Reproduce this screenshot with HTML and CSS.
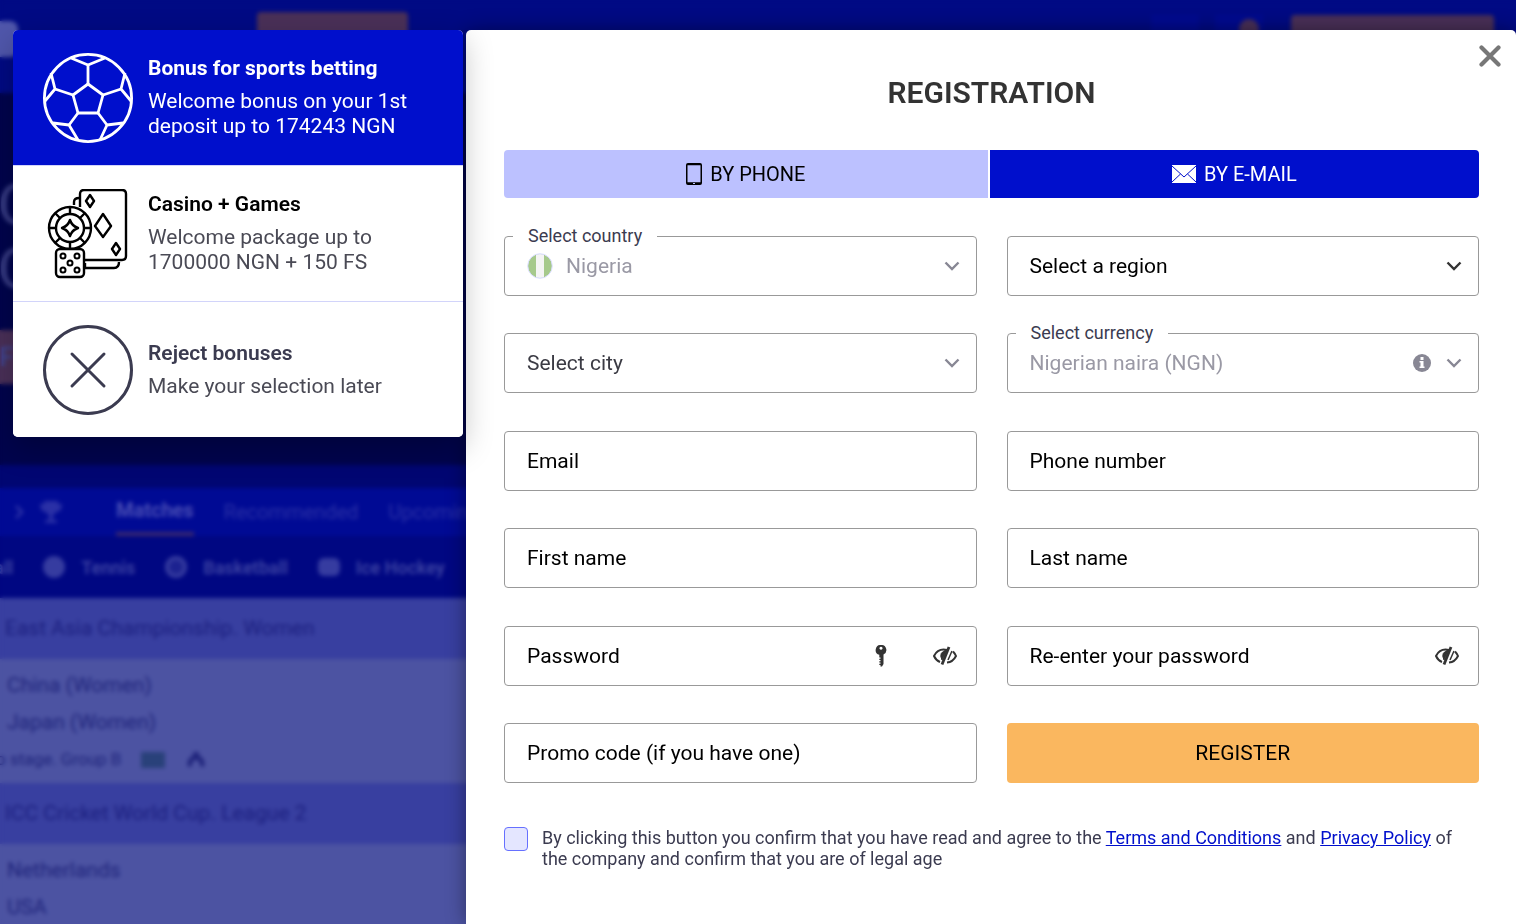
FILE: index.html
```html
<!DOCTYPE html>
<html lang="en">
<head>
    <meta charset="UTF-8">
    <meta name="viewport" content="width=device-width, initial-scale=1.0">
    <title>Registration</title>
    <link rel="stylesheet" href="styles.css">
</head>
<body>

<!-- Page behind the popup -->
<div class="site" aria-hidden="true">
    <div class="site-header">
        <span class="site-logo"></span>
        <span class="site-btn"></span>
        <span class="site-tools">
            <span class="site-tool"></span>
            <span class="site-tool"><span class="site-badge"></span></span>
            <span class="site-btn site-btn-wide"></span>
        </span>
    </div>
    <div class="site-hero">
        <p>C</p>
        <p>C</p>
        <span class="hero-btn">F</span>
    </div>
    <div class="site-strip"></div>
    <div class="site-tabs">
        <svg width="10" height="16" viewBox="0 0 10 16"><path d="M2 2l6 6-6 6" fill="none" stroke="currentColor" stroke-width="3"/></svg>
        <svg class="cup" width="24" height="24" viewBox="0 0 24 24"><path d="M5 1h14v3h4c0 5-2 8-6 8-1 2-2 3-3 3v5h4v3H6v-3h4v-5c-1 0-2-1-3-3-4 0-6-3-6-8h4z" fill="currentColor"/></svg>
        <span class="tab-on">Matches</span>
        <span>Recommended</span>
        <span>Upcoming</span>
    </div>
    <div class="site-sports">
        <span>Football</span>
        <i class="ball"></i><span>Tennis</span>
        <i class="ball ball-ring"></i><span>Basketball</span>
        <i class="ball ball-wide"></i><span>Ice Hockey</span>
    </div>
    <div class="league">East Asia Championship. Women</div>
    <div class="match">
        <p>China (Women)</p>
        <p>Japan (Women)</p>
        <div class="match-info">
            <span>Group stage. Group B</span>
            <i class="pitch"></i>
            <svg width="22" height="18" viewBox="0 0 22 18"><path d="M3 16c-2-6 2-12 8-12s10 6 8 12l-4-1c0-4-1-6-4-6s-4 2-4 6zM8 1h6v5H8z" fill="currentColor"/></svg>
        </div>
    </div>
    <div class="league">ICC Cricket World Cup. League 2</div>
    <div class="match">
        <p>Netherlands</p>
        <p>USA</p>
    </div>
</div>
<div class="shade"></div>

<div class="popup">
    <aside class="bonuses">
        <button type="button" class="bonus active">
            <svg class="bonus-icon" viewBox="0 0 90 90" fill="none" stroke="currentColor" stroke-width="2.8" stroke-linejoin="round">
                <circle cx="45" cy="45" r="43.600"/>
                <path d="M45 31l15 11-5 18H35l-5-18z"/>
                <path d="M45 31V12M60 42l18-6M55 60l9 12M35 60l-9 12M30 42l-18-6"/>
                <path d="M28 5l17 7 17-7M82 20l-4 16 10 12M80 70l-16 2-7 15M10 70l16 2 9 15M8 20l4 16L2 48"/>
            </svg>
            <span class="bonus-text">
                <strong>Bonus for sports betting</strong>
                <span>Welcome bonus on your 1st deposit up to 174243 NGN</span>
            </span>
        </button>
        <button type="button" class="bonus">
            <svg class="bonus-icon" viewBox="0 0 90 90" fill="none" stroke="currentColor" stroke-width="2.4" stroke-linejoin="round">
                <path d="M31 16V13q0-4 5-4M42 74v5h29q5 0 5-6" />
                <path d="M37 18V5q0-4 4-4h38q4 0 4 4v62q0 4-4 4H42"/>
                <path d="M47 6l4 6-4 6-4-6zM60 25l8 12-8 11-8-11zM73 54l4 6-4 6-4-6z"/>
                <circle cx="27" cy="39" r="21" fill="#fff"/>
                <circle cx="27" cy="39" r="14"/>
                <path d="M27 31q2 6 8 8-6 2-8 8-2-6-8-8 6-2 8-8z"/>
                <path d="M27 18v7M27 53v7M6 39h7M41 39h7M12 24l5 5M42 24l-5 5M12 54l5-5M42 54l-5-5"/>
                <rect x="13" y="60" width="28" height="28" rx="4" fill="#fff"/>
                <g stroke-width="2">
                    <circle cx="20" cy="67" r="2.5"/><circle cx="34" cy="67" r="2.5"/><circle cx="27" cy="74" r="2.5"/><circle cx="20" cy="81" r="2.5"/><circle cx="34" cy="81" r="2.5"/>
                </g>
            </svg>
            <span class="bonus-text">
                <strong>Casino + Games</strong>
                <span>Welcome package up to 1700000 NGN + 150 FS</span>
            </span>
        </button>
        <button type="button" class="bonus bonus-reject">
            <svg class="bonus-icon" viewBox="0 0 90 90" fill="none" stroke="currentColor" stroke-width="3" stroke-linecap="round">
                <circle cx="45" cy="45" r="43.5"/>
                <path d="M29 29l32 32M61 29L29 61"/>
            </svg>
            <span class="bonus-text">
                <strong>Reject bonuses</strong>
                <span>Make your selection later</span>
            </span>
        </button>
    </aside>

    <main class="registration">
        <button type="button" class="close" aria-label="Close">
            <svg width="22" height="22" viewBox="0 0 22 22"><path d="M2.500 2.500l17 17M19.500 2.500l-17 17" stroke="currentColor" stroke-width="4.200" stroke-linecap="round"/></svg>
        </button>
        <h1>REGISTRATION</h1>

        <div class="tabs">
            <button type="button" class="tab">
                <svg width="16" height="24" viewBox="0 0 16 24"><path fill="currentColor" fill-rule="evenodd" d="M2 1h12q2 0 2 2v18q0 2-2 2H2q-2 0-2-2V3q0-2 2-2zm-.500 2.300v17h13v-17z"/><path d="M7 21.500h2" stroke="#bcc1ff"/></svg>
                BY PHONE
            </button>
            <button type="button" class="tab active">
                <svg width="24" height="18" viewBox="0 0 24 18"><path fill="currentColor" d="M0 0h24v18H0z"/><path d="M0 1l12 11L24 1M0 17l8.500-8M24 17l-8.500-8" fill="none" stroke="#000fcc" stroke-width="1"/></svg>
                BY E-MAIL
            </button>
        </div>

        <form>
            <div class="group">
                <div class="field field-set">
                    <label for="country">Select country</label>
                    <svg class="flag" width="26" height="26" viewBox="0 0 26 26">
                        <clipPath id="round"><circle cx="13" cy="13" r="12"/></clipPath>
                        <g clip-path="url(#round)"><path fill="#a6c98c" d="M0 0h26v26H0z"/><path fill="#f4f4f4" d="M9 0h8v26H9z"/></g>
                        <circle cx="13" cy="13" r="12.300" fill="none" stroke="#d9dcff"/>
                    </svg>
                    <select id="country" disabled><option>Nigeria</option></select>
                    <svg class="arrow" width="16" height="10" viewBox="0 0 16 10"><path d="M1.500 1.500L8 8l6.500-6.500"/></svg>
                </div>
                <div class="field">
                    <label for="region">Select a region</label>
                    <select id="region"><option></option></select>
                    <svg class="arrow" width="16" height="10" viewBox="0 0 16 10"><path d="M1.500 1.500L8 8l6.500-6.500"/></svg>
                </div>
                <div class="field field-off">
                    <label for="city">Select city</label>
                    <select id="city" disabled><option></option></select>
                    <svg class="arrow" width="16" height="10" viewBox="0 0 16 10"><path d="M1.500 1.500L8 8l6.500-6.500"/></svg>
                </div>
                <div class="field field-set">
                    <label for="currency">Select currency</label>
                    <select id="currency" disabled><option>Nigerian naira (NGN)</option></select>
                    <svg class="info" width="18" height="18" viewBox="0 0 18 18"><circle cx="9" cy="9" r="9" fill="currentColor"/><path fill="#fff" d="M7.500 3h3v3h-3zM6.500 7h4v5.500h1V14h-5v-1.500h1v-4h-1z"/></svg>
                    <svg class="arrow" width="16" height="10" viewBox="0 0 16 10"><path d="M1.500 1.500L8 8l6.500-6.500"/></svg>
                </div>
            </div>

            <div class="group">
                <div class="field">
                    <label for="email">Email</label>
                    <input type="email" id="email" name="email">
                </div>
                <div class="field">
                    <label for="phone">Phone number</label>
                    <input type="tel" id="phone" name="phone">
                </div>
                <div class="field">
                    <label for="first_name">First name</label>
                    <input type="text" id="first_name" name="first_name">
                </div>
                <div class="field">
                    <label for="last_name">Last name</label>
                    <input type="text" id="last_name" name="last_name">
                </div>
            </div>

            <div class="group">
                <div class="field">
                    <label for="password">Password</label>
                    <input type="password" id="password" name="password">
                    <button type="button" class="icon-btn key" aria-label="Generate password">
                        <svg width="12" height="22" viewBox="0 0 12 22"><path fill="currentColor" fill-rule="evenodd" d="M6 0a5 5 0 0 1 2.500 9.500V19L7 21.500H5.500V20H4.300v-1.200h1.200v-1.300H4.300v-1.200h1.200V15H4.300v-1.200h1.200v-1.300H4.300V9.800A5 5 0 0 1 6 0zm0 1.800a1.500 1.500 0 1 0 .01 0z"/></svg>
                    </button>
                    <button type="button" class="icon-btn" aria-label="Show password">
                        <svg width="24" height="20" viewBox="0 0 24 20" fill="none" stroke="currentColor" stroke-width="2"><path d="M14 4Q5 2 1 10q2 4.500 6 6M20 5.500Q22 7.500 23 10q-3 6-9 6.500"/><path d="M16 1L9 18.500" stroke-width="2.800"/><path d="M14 4Q5 6 9 14z" fill="currentColor" stroke-width="1"/><path d="M19 5L15 14" stroke-width="1.500"/></svg>
                    </button>
                </div>
                <div class="field">
                    <label for="password2">Re-enter your password</label>
                    <input type="password" id="password2" name="password2">
                    <button type="button" class="icon-btn" aria-label="Show password">
                        <svg width="24" height="20" viewBox="0 0 24 20" fill="none" stroke="currentColor" stroke-width="2"><path d="M14 4Q5 2 1 10q2 4.500 6 6M20 5.500Q22 7.500 23 10q-3 6-9 6.500"/><path d="M16 1L9 18.500" stroke-width="2.800"/><path d="M14 4Q5 6 9 14z" fill="currentColor" stroke-width="1"/><path d="M19 5L15 14" stroke-width="1.500"/></svg>
                    </button>
                </div>
                <div class="field">
                    <label for="promo">Promo code (if you have one)</label>
                    <input type="text" id="promo" name="promo">
                </div>
                <button type="submit" class="register">REGISTER</button>
            </div>

            <div class="agree">
                <input type="checkbox" id="agree" name="agree">
                <label for="agree">By clicking this button you confirm that you have read and agree to the <a href="#">Terms and Conditions</a> and <a href="#">Privacy Policy</a> of the company and confirm that you are of legal age</label>
            </div>
        </form>
    </main>
</div>

</body>
</html>
```

FILE: styles.css
```css
* {
    box-sizing: border-box;
}

body {
    margin: 0;
    font-family: Roboto, "Liberation Sans", sans-serif;
    background-color: #000a80;
    overflow: hidden;
}

p {
    margin: 0;
}

button,
input,
select {
    font-family: inherit;
    margin: 0;
}

button {
    cursor: pointer;
}

/* page behind the popup */
.site,
.shade {
    position: fixed;
    inset: 0;
    overflow: hidden;
}

.site {
    color: #1c2080;
    font-size: 20px;
}

.shade {
    backdrop-filter: blur(2px);
}

.site-header {
    display: flex;
    align-items: flex-start;
    height: 93px;
    padding: 12px 22px 0 0;
    background-color: #000a84;
}

.site-logo {
    width: 18px;
    height: 36px;
    margin: 9px 239px 0 0;
    border-radius: 0 8px 8px 0;
    background-color: #5057ac;
}

.site-btn {
    width: 151px;
    height: 44px;
    border-radius: 4px;
    background-color: #4a3058;
}

.site-tools {
    display: flex;
    gap: 16px;
    margin: 3px 0 0 auto;
}

.site-tool {
    width: 48px;
    height: 44px;
    background-color: #000a90;
}

.site-badge {
    display: block;
    width: 20px;
    height: 20px;
    margin: 4px 0 0 24px;
    border-radius: 50%;
    background-color: #4a3058;
}

.site-btn-wide {
    width: 203px;
    margin-left: 12px;
}

.site-hero {
    height: 372px;
    padding-top: 80px;
    background-color: #00044d;
    color: #3c4088;
    font-size: 56px;
    line-height: 64px;
}

.site-hero p {
    margin-left: -2px;
}

.hero-btn {
    display: block;
    width: 200px;
    margin-top: 29px;
    background-color: #4a3058;
    color: #3c4aa0;
    font-size: 26px;
    line-height: 54px;
}

.site-strip {
    height: 23px;
    background-color: #000672;
}

.site-tabs {
    display: flex;
    align-items: center;
    height: 48px;
    padding-left: 14px;
    background-color: #000a94;
    color: #2a30a6;
}

.site-tabs .cup {
    margin: 0 53px 0 15px;
}

.site-tabs span {
    margin-right: 30px;
    line-height: 48px;
}

.site-tabs .tab-on {
    border-bottom: 4px solid #3a2870;
    color: #4c50b6;
    font-weight: 600;
    line-height: 44px;
}

.site-sports {
    display: flex;
    align-items: center;
    height: 62px;
    margin-left: -52px;
    background-color: #000782;
    color: #3c42a2;
    font-size: 18px;
    font-weight: 600;
    white-space: nowrap;
}

.ball {
    width: 22px;
    height: 22px;
    margin: 0 16px 0 30px;
    border-radius: 50%;
    background-color: #363ca0;
}

.ball-ring {
    border: 4px solid #363ca0;
    background-color: #1c2290;
}

.ball-wide {
    height: 18px;
    border-radius: 6px;
}

.league {
    padding-left: 5px;
    background-color: #383fa0;
    font-size: 21px;
    line-height: 61px;
}

.match {
    padding: 8px 7px 5px;
    background-color: #4c53a2;
    color: #20257c;
    font-size: 21px;
    line-height: 37px;
}

.match-info {
    display: flex;
    align-items: center;
    gap: 20px;
    margin-left: -47px;
    font-size: 17px;
    white-space: nowrap;
}

.pitch {
    width: 24px;
    height: 16px;
    background-color: #29417a;
}

.match:last-child {
    min-height: 120px;
}

/* popup */
.popup {
    position: relative;
    display: flex;
    align-items: flex-start;
    gap: 3px;
    padding: 30px 0 0 13px;
}

.bonuses {
    position: relative;
    z-index: 1;
    flex: 0 0 450px;
    border-radius: 5px;
    overflow: hidden;
    background-color: #fff;
    box-shadow: 0 10px 30px rgba(0, 0, 0, 0.25);
}

.bonus {
    display: flex;
    align-items: center;
    gap: 15px;
    width: 100%;
    min-height: 136px;
    padding: 22px 30px;
    border: none;
    border-bottom: 1px solid #d2d4fa;
    background-color: #fff;
    color: #000;
    font-size: 21px;
    line-height: 25px;
    text-align: left;
}

.bonus:last-child {
    min-height: 135px;
    border-bottom: none;
}

.bonus.active {
    background-color: #000fcc;
    color: #fff;
}

.bonus-reject {
    color: #3b3b50;
}

.bonus-icon {
    flex: none;
    width: 90px;
    height: 90px;
}

.bonus-text {
    display: flex;
    flex-direction: column;
    gap: 8px;
}

.bonus-text strong {
    font-weight: 600;
}

.bonus.active strong {
    font-weight: 700;
}

.bonus-text span {
    color: #4a4a55;
}

.bonus.active span {
    color: #fff;
}

.registration {
    position: relative;
    flex: 1;
    min-height: calc(100vh - 30px);
    padding: 44px 37px 50px 38px;
    border-radius: 5px 5px 0 0;
    background-color: #fff;
    box-shadow: 0 0 20px rgba(0, 0, 0, 0.4);
}

.close {
    position: absolute;
    top: 15px;
    right: 15px;
    display: flex;
    padding: 0;
    border: none;
    background: none;
    color: #777;
}

h1 {
    margin: 0 0 38px;
    color: #333;
    font-size: 30px;
    font-weight: 600;
    line-height: 38px;
    text-align: center;
}

.tabs {
    display: flex;
    gap: 2px;
    margin-bottom: 38px;
}

.tab {
    display: flex;
    flex: 1 1 auto;
    align-items: center;
    justify-content: center;
    gap: 8px;
    height: 48px;
    padding: 0;
    border: none;
    border-radius: 4px 0 0 4px;
    background-color: #bcc1ff;
    color: #000;
    font-size: 20px;
}

.tab.active {
    border-radius: 0 4px 4px 0;
    background-color: #000fcc;
    color: #fff;
}

form {
    display: flex;
    flex-direction: column;
    gap: 38px;
}

.group {
    display: grid;
    grid-template-columns: 1fr 1fr;
    gap: 37px 30px;
}

.field {
    position: relative;
    display: flex;
    align-items: center;
    height: 60px;
    padding: 0 16px 0 22px;
    border: 1px solid #999;
    border-radius: 4px;
    color: #333;
}

.field label {
    position: absolute;
    left: 22px;
    color: #000;
    font-size: 21px;
    line-height: 26px;
    pointer-events: none;
}

.field input,
.field select {
    flex: 1;
    min-width: 0;
    height: 58px;
    padding: 0;
    border: none;
    outline: none;
    appearance: none;
    background: transparent;
    color: #000;
    font-size: 21px;
    opacity: 1;
}

.field-off,
.field-set {
    color: #888794;
}

.field-off label {
    color: #3b3b44;
}

.field-set select {
    color: #9a99a5;
}

/* label sits on the border once a value is chosen */
.field-set label {
    top: -14px;
    left: 8px;
    padding: 0 15px;
    background-color: #fff;
    color: #3b3b50;
    font-size: 18px;
}

.flag {
    margin-right: 13px;
}

.arrow {
    fill: none;
    stroke: currentColor;
    stroke-width: 2.4;
}

.info {
    margin-right: 15px;
}

.icon-btn {
    display: flex;
    padding: 0 3px 0 0;
    border: none;
    background: none;
    color: #333;
}

.key {
    margin-right: 43px;
}

.register {
    height: 60px;
    border: none;
    border-radius: 4px;
    background-color: #fab75f;
    color: #000;
    font-size: 21px;
}

.agree {
    display: flex;
    align-items: flex-start;
    gap: 14px;
    margin-top: 6px;
    color: #3b3b50;
    font-size: 18px;
    line-height: 21px;
}

.agree input {
    flex: none;
    width: 24px;
    height: 24px;
    border: 1px solid #6670ff;
    border-radius: 4px;
    appearance: none;
    background-color: #e4e6ff;
}

.agree input:checked {
    background-color: #000fcc;
}

.agree a {
    color: #000fcc;
}
```
